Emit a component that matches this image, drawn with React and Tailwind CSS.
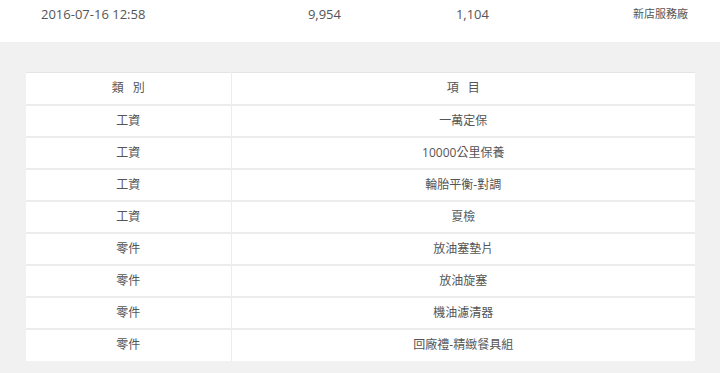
import React from 'react';

const rows = [
  ['工資', '一萬定保'],
  ['工資', '10000公里保養'],
  ['工資', '輪胎平衡-對調'],
  ['工資', '夏檢'],
  ['零件', '放油塞墊片'],
  ['零件', '放油旋塞'],
  ['零件', '機油濾清器'],
  ['零件', '回廠禮-精緻餐具組'],
];

const App = () => {
  return (
    <div
      className="w-[720px] h-[373px] bg-[#f1f1f1] text-[#555] overflow-hidden"
      style={{ fontFamily: '"Open Sans", "Noto Sans CJK TC", sans-serif' }}
    >
      <div className="h-[42px] bg-white flex items-start pt-[5px] text-[13px] leading-[18px]">
        <div className="w-[190px] pl-[41px]">2016-07-16 12:58</div>
        <div className="w-[151px] text-right">9,954</div>
        <div className="w-[148px] text-right">1,104</div>
        <div className="w-[199px] text-right text-[11px]">新店服務廠</div>
      </div>

      <div className="pt-[30px] pl-[26px]">
        <table className="w-[669px] bg-white border-collapse text-[12px] border-t border-[#e4e4e4]">
          <thead>
            <tr className="h-[32px] border-b-2 border-[#ececec]">
              <th className="w-[205px] font-normal text-center border-r border-[#ececec]">
                <span className="mr-[9px]">類</span>別
              </th>
              <th className="font-normal text-center">
                <span className="mr-[9px]">項</span>目
              </th>
            </tr>
          </thead>
          <tbody>
            {rows.map((r, i) => (
              <tr
                key={i}
                className={`h-[32px] ${i < rows.length - 1 ? 'border-b-2 border-[#ececec]' : ''}`}
              >
                <td className="text-center border-r border-[#ececec]">{r[0]}</td>
                <td className="text-center">{r[1]}</td>
              </tr>
            ))}
          </tbody>
        </table>
      </div>
    </div>
  );
};

export default App;
